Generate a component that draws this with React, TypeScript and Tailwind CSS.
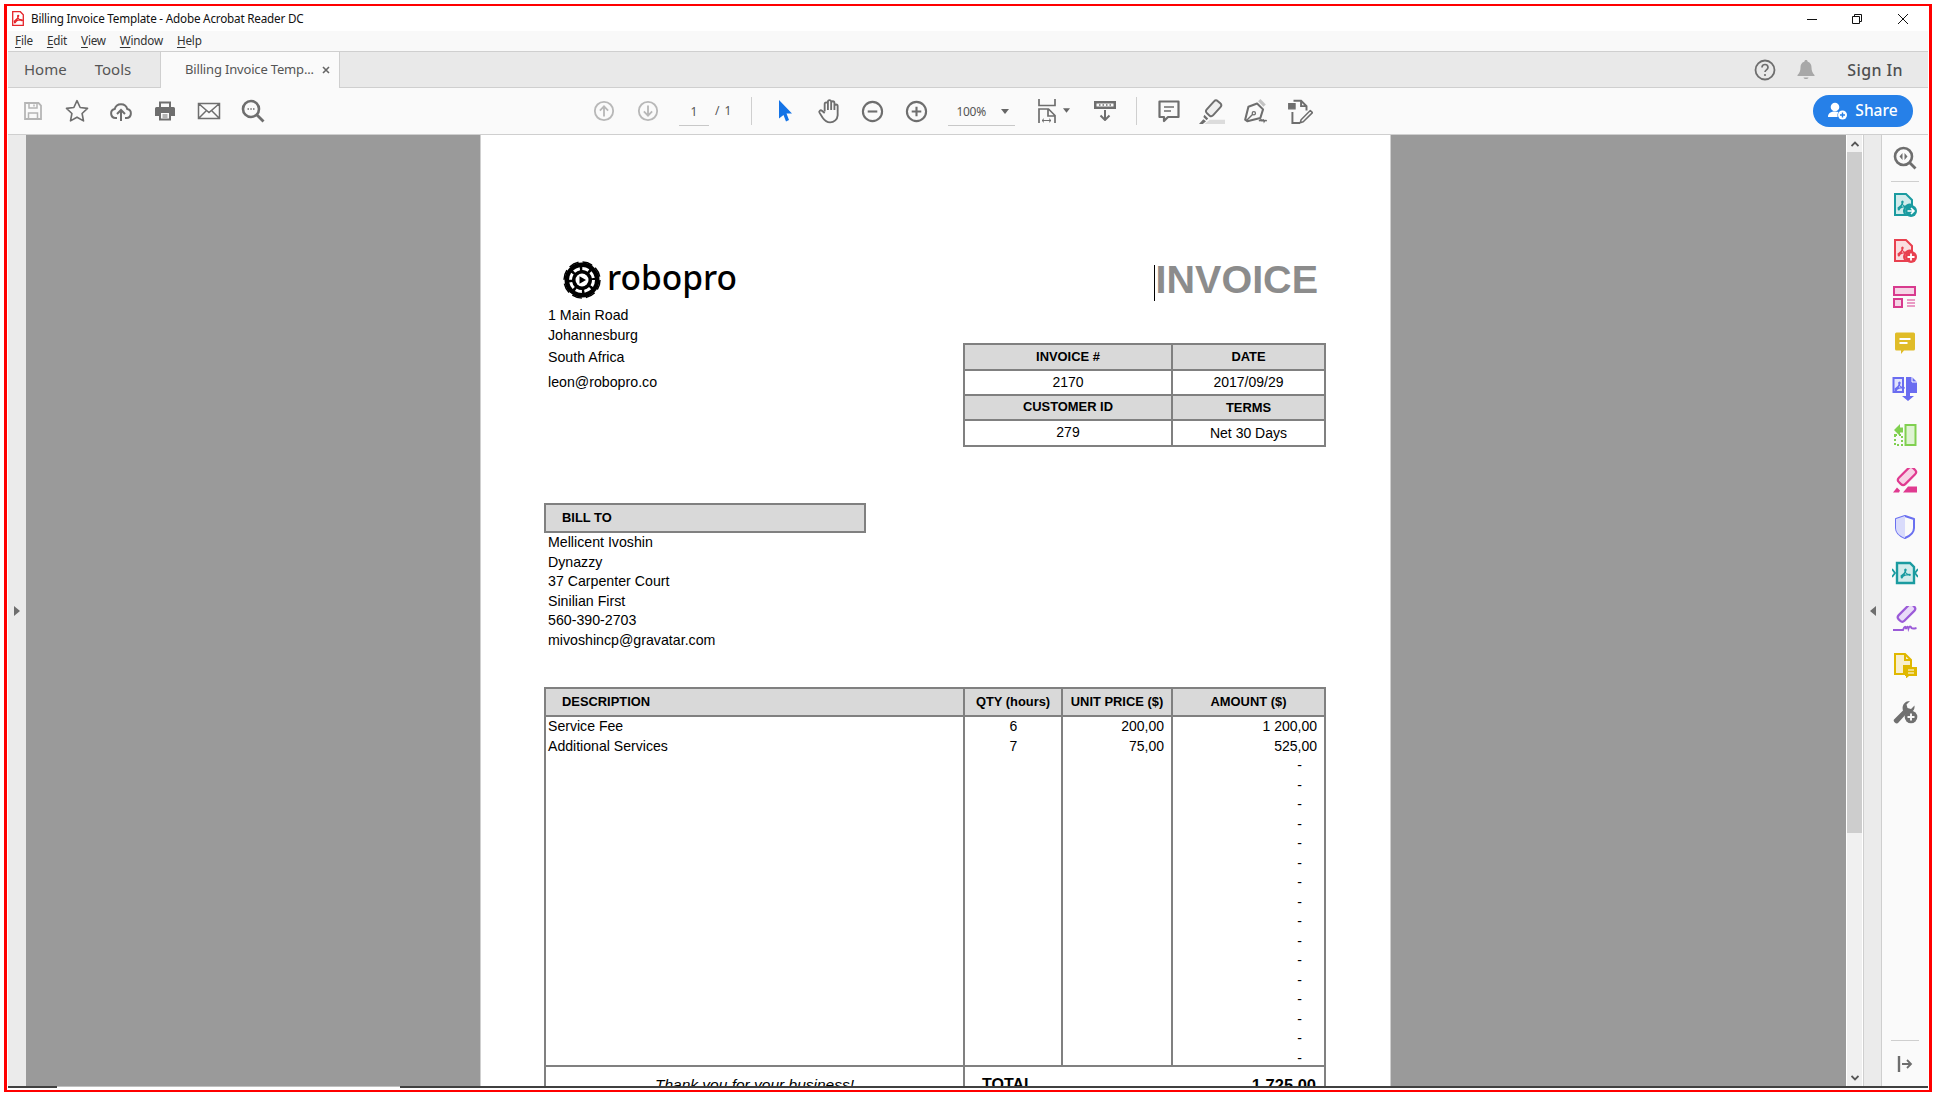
import type { ReactNode } from 'react';

const ui = "[font-family:'Noto_Sans',sans-serif]";
const doc = "[font-family:'Liberation_Sans',Arial,sans-serif]";

// Acrobat squiggle, reused by the coloured tool icons
function Squiggle({ color, x = 0, y = 0, s = 1 }: { color: string; x?: number; y?: number; s?: number }) {
  return (
    <g transform={`translate(${x} ${y}) scale(${s})`} fill="none" stroke={color} strokeWidth="1.300" strokeLinecap="round">
      <path d="M0 7C2.500 5.500 4.500 3 5 1c.2-1-1.200-1-1.200 0 0 2 2 4.500 4.700 5.200.9.2.9-.9 0-.9-3 0-5.800.8-8 2.700-.5.5.3 1 .7.5C2.800 6.500 3.500 4.500 4 3" />
    </g>
  );
}

function Slot({ children, w = 'w-[44px]' }: { children: ReactNode; w?: string }) {
  return <div className={`flex h-[46px] shrink-0 items-center justify-center ${w}`}>{children}</div>;
}

function Ico({ children, size = 24 }: { children: ReactNode; size?: number }) {
  return (
    <svg width={size} height={size} viewBox="0 0 24 24" fill="none" stroke="#6e6e6e" strokeWidth="1.800">
      {children}
    </svg>
  );
}

function ToolIcon({ children }: { children: ReactNode }) {
  return (
    <div className="flex h-[46px] w-full items-center justify-center">
      <svg width="26" height="26" viewBox="0 0 26 26" fill="none">
        {children}
      </svg>
    </div>
  );
}

const menus = ['File', 'Edit', 'View', 'Window', 'Help'];

const services = [
  ['Service Fee', '6', '200,00', '1 200,00'],
  ['Additional Services', '7', '75,00', '525,00'],
];

const billTo = ['Mellicent Ivoshin', 'Dynazzy', '37 Carpenter Court', 'Sinilian First', '560-390-2703', 'mivoshincp@gravatar.com'];

function TitleBar() {
  return (
    <div className="flex h-[25px] shrink-0 items-center bg-white">
      <svg className="ml-[4px]" width="12" height="15" viewBox="0 0 12 15" fill="none">
        <path d="M.7.7h7.600l3 3v10.600H.7z" fill="#fff" stroke="#e5252a" strokeWidth="1.300" />
        <Squiggle color="#e5252a" x={2.2} y={4} s={0.9} />
      </svg>
      <span className={`ml-[7px] text-[11.700px] tracking-[-0.2px] text-[#111] ${ui}`}>Billing Invoice Template - Adobe Acrobat Reader DC</span>
      <div className="ml-auto flex items-center pr-[20px]">
        <svg width="10" height="10" viewBox="0 0 10 10" stroke="#111" fill="none"><path d="M0 5.500h10" /></svg>
        <svg className="ml-[35px]" width="10" height="10" viewBox="0 0 10 10" stroke="#111" fill="none"><path d="M.5 2.500h7v7h-7zM2.500 2.500v-2h7v7h-2" /></svg>
        <svg className="ml-[36px]" width="10" height="10" viewBox="0 0 10 10" stroke="#111" fill="none"><path d="M0 0l10 10M10 0L0 10" /></svg>
      </div>
    </div>
  );
}

function MenuBar() {
  return (
    <div className={`flex h-[21px] shrink-0 items-center gap-[14px] border-b border-[#cfcfcf] bg-[#f9f9f9] pb-[1px] pl-[7px] text-[11.700px] tracking-[-0.2px] text-[#333] ${ui}`}>
      {menus.map((m) => (
        <span key={m}>
          <span className="underline underline-offset-2">{m[0]}</span>
          {m.slice(1)}
        </span>
      ))}
    </div>
  );
}

function TabBar() {
  return (
    <div className={`flex h-[36px] shrink-0 border-b border-[#cfcfcf] bg-[#e9e9e9] text-[#555] ${ui}`}>
      <div className="flex w-[152px] items-center gap-[28px] pl-[16px] text-[15px]">
        <span>Home</span>
        <span>Tools</span>
      </div>
      <div className="-mb-px flex w-[180px] items-center border-x border-[#cfcfcf] bg-[#fafafa] pl-[24px] text-[13px] tracking-[-0.17px]">
        <span>Billing Invoice Temp...</span>
        <svg className="ml-[8px]" width="8" height="8" viewBox="0 0 8 8" stroke="#666" strokeWidth="1.600"><path d="M1 1l6 6M7 1L1 7" /></svg>
      </div>
      <div className="ml-auto flex items-center pr-[25px]">
        <svg width="22" height="22" viewBox="0 0 22 22" fill="none">
          <circle cx="11" cy="11" r="9.500" stroke="#6e6e6e" strokeWidth="1.800" />
          <path d="M8 8.500c0-4 6-4 6 0 0 2.200-3 2.400-3 4.500" stroke="#6e6e6e" strokeWidth="1.700" />
          <circle cx="11" cy="16" r="1.100" fill="#6e6e6e" />
        </svg>
        <svg className="ml-[21px]" width="18" height="20" viewBox="0 0 18 20">
          <path d="M9 0c1 0 1.600.6 1.700 1.700 2.800.8 3.800 3 3.800 5.800 0 3.500 1 5.500 3 7.500v1H.5v-1c2-2 3-4 3-7.500 0-2.800 1-5 3.800-5.800C7.400.6 8 0 9 0zM6.500 17.500h5C11 19.500 7 19.500 6.500 17.500z" fill="#a8a8a8" />
        </svg>
        <span className="ml-[32px] text-[16px] font-medium tracking-[0.4px] text-[#505050]">Sign In</span>
      </div>
    </div>
  );
}

function Toolbar() {
  return (
    <div className="flex h-[47px] shrink-0 items-center border-b border-[#cfcfcf] bg-[#fafafa] pl-[3px]">
      <Slot>
        <Ico>
          <path d="M4 4h13.500L20 6.500V20H4z" stroke="#b5b5b5" />
          <path d="M8 4v5h8V4M7.500 20v-6h9v6M13 5.500v2" stroke="#b5b5b5" strokeWidth="1.500" />
        </Ico>
      </Slot>
      <Slot>
        <Ico size={26}>
          <path d="M12 2.500l2.900 6.300 6.800.8-5 4.700 1.300 6.800L12 17.700l-6 3.400 1.300-6.800-5-4.700 6.800-.8z" strokeLinejoin="round" strokeWidth="1.500" />
        </Ico>
      </Slot>
      <Slot>
        <Ico>
          <path d="M8 19H6.500a4.500 4.500 0 0 1-.8-8.900 6.500 6.500 0 0 1 12.600 0 4.500 4.500 0 0 1-.8 8.900H16" strokeWidth="2" />
          <path d="M12 22V11.500M8 15l4-4 4 4" strokeWidth="2" />
        </Ico>
      </Slot>
      <Slot>
        <Ico>
          <path d="M6 8V2.500h12V8h2.500A1.500 1.500 0 0 1 22 9.500V17h-4v4.500H6V17H2V9.500A1.500 1.500 0 0 1 3.500 8z" fill="#6e6e6e" stroke="none" />
          <path d="M8 4.500h8V8H8zM8 14h8v5.500H8z" fill="#fafafa" stroke="none" />
          <path d="M9.500 16h5M9.500 18h5" strokeWidth="1" />
        </Ico>
      </Slot>
      <Slot>
        <Ico>
          <path d="M1.500 4.500h21v15h-21zM1.500 4.500l10.500 9 10.500-9M1.500 19.500l8-8M22.500 19.500l-8-8" strokeWidth="1.500" />
        </Ico>
      </Slot>
      <Slot>
        <Ico>
          <circle cx="10" cy="10" r="8" strokeWidth="2.600" />
          <path d="M15.500 15.500l7 7" strokeWidth="2.800" />
          <path d="M6.500 10h1.500M9.300 10h1.500M12 10h1.500" strokeWidth="1.400" />
        </Ico>
      </Slot>

      <div className="ml-[307px] flex items-center">
        <Slot>
          <Ico size={22}>
            <circle cx="12" cy="12" r="10" stroke="#b8b8b8" strokeWidth="2" />
            <path d="M12 18V7M7.500 11.500L12 7l4.500 4.500" stroke="#b8b8b8" strokeWidth="2" />
          </Ico>
        </Slot>
        <Slot w="w-[43px]">
          <Ico size={22}>
            <circle cx="12" cy="12" r="10" stroke="#b8b8b8" strokeWidth="2" />
            <path d="M12 6v11M7.500 12.500L12 17l4.500-4.500" stroke="#b8b8b8" strokeWidth="2" />
          </Ico>
        </Slot>
        <div className={`ml-[10px] flex h-[30px] w-[30px] items-center justify-center border-b border-[#c8c8c8] pt-[2px] text-[12px] text-[#555] ${ui}`}>1</div>
        <span className={`ml-[6px] text-[12px] tracking-[1px] text-[#555] ${ui}`}>/ 1</span>
      </div>

      <div className="ml-[19px] h-[28px] w-px bg-[#cfcfcf]" />

      <div className="ml-[11px] flex items-center">
        <Slot>
          <svg width="14" height="22" viewBox="0 0 14 22">
            <path d="M1 0l13 13.500H8.500L11 20l-3 1.500-2.500-6.500L1 18.500z" fill="#1473e6" />
          </svg>
        </Slot>
        <Slot w="w-[43px]">
          <Ico size={26}>
            <path d="M8 12.500V5.500a1.500 1.500 0 0 1 3 0V11M11 11V3.500a1.500 1.500 0 0 1 3 0V11M14 11V4.500a1.500 1.500 0 0 1 3 0V11M17 11V7.500a1.500 1.500 0 0 1 3 0v8.500a7 7 0 0 1-7 6.500c-3.500 0-5-1.500-7-4.500l-2.800-4.500c-.8-1.500 1-2.800 2.300-1.700L8 14" strokeWidth="1.700" strokeLinejoin="round" />
          </Ico>
        </Slot>
        <Slot>
          <Ico size={23}>
            <circle cx="12" cy="12" r="10" strokeWidth="2.200" />
            <path d="M7 12h10" strokeWidth="2.200" />
          </Ico>
        </Slot>
        <Slot>
          <Ico size={23}>
            <circle cx="12" cy="12" r="10" strokeWidth="2.200" />
            <path d="M7 12h10M12 7v10" strokeWidth="2.200" />
          </Ico>
        </Slot>
      </div>

      <div className={`ml-[10px] flex h-[30px] w-[67px] items-center border-b border-[#c8c8c8] pl-[8px] pt-[2px] text-[12px] tracking-[-0.3px] text-[#555] ${ui}`}>
        100%
        <svg className="ml-[15px]" width="8" height="5" viewBox="0 0 8 5"><path d="M0 0h8L4 5z" fill="#666" /></svg>
      </div>

      <div className="ml-[23px] flex items-center">
        <svg width="18" height="24" viewBox="0 0 18 24" fill="none" stroke="#6e6e6e" strokeWidth="1.700">
          <path d="M1 0v6.500h16V0M1 24V10h9.500l6.500 6.500V24M10 10v7h7" />
          <path d="M4 21.500h9M4 21.500l2-1.800M4 21.500l2 1.800M13 21.500l-2-1.800M13 21.500l-2 1.800" strokeWidth="1" />
        </svg>
        <svg className="ml-[7px] -mt-[2px]" width="7" height="5" viewBox="0 0 8 5"><path d="M0 0h8L4 5z" fill="#666" /></svg>
      </div>

      <Slot w="w-[22px] ml-[24px]">
        <svg width="22" height="20" viewBox="0 0 22 20" fill="none">
          <path d="M0 0h22v8H0z" fill="#6e6e6e" />
          <path d="M2.500 2.500h17v3h-17z" fill="#fafafa" />
          <path d="M5 4h1.500M8.500 4h1.500M12 4h1.500M15.500 4H17" stroke="#6e6e6e" strokeWidth="1.500" />
          <path d="M11 9v10M6.500 14.500L11 19l4.500-4.500" stroke="#6e6e6e" strokeWidth="2" />
        </svg>
      </Slot>

      <div className="ml-[20px] h-[28px] w-px bg-[#cfcfcf]" />

      <div className="ml-[10px] flex items-center">
        <Slot w="w-[43px]">
          <Ico>
            <path d="M2.500 2.500h19V18H11l-4 4v-4H2.500z" strokeWidth="2.200" strokeLinejoin="round" />
            <path d="M7 8h10M7 12h7" strokeWidth="1.500" />
          </Ico>
        </Slot>
        <Slot>
          <Ico size={26}>
            <path d="M5 24h19v-4H10z" fill="#dcdcdc" stroke="none" />
            <rect x="9.500" y="2" width="8" height="15" rx="2.500" transform="rotate(42 13.500 9.500)" fill="#eeeeee" strokeWidth="1.800" />
            <path d="M5 15.500l3.500 3.500-1.500 1.500-3-3z" fill="#6e6e6e" stroke="none" />
            <path d="M0 24l4-4.500 2.500 2L3.500 24z" fill="#6e6e6e" stroke="none" />
          </Ico>
        </Slot>
        <Slot>
          <Ico size={26}>
            <path d="M15 2l5 5" stroke="#c4c4c4" strokeWidth="3" />
            <path d="M13 5l-8 3-3 12 2 1.500 12-3 2.500-8z" strokeLinejoin="round" strokeWidth="1.900" />
            <path d="M3 21l6-6" strokeWidth="1.300" />
            <circle cx="10" cy="14" r="1.500" strokeWidth="1.200" />
            <path d="M15 21.500c.8-2 1.400-2 1.500 0 .5-2 1-2 1.500 0 .5-2 1-2 1.500 0 .5-1 1-1 2.500-.5" strokeWidth="1.400" />
          </Ico>
        </Slot>
        <Slot>
          <Ico size={26}>
            <path d="M1.500 5h6v5h-6z" fill="#6e6e6e" strokeWidth="1" />
            <path d="M6 2.500h7l5 5v4M13 2.500v5h5M5 13v10h7" strokeWidth="1.800" />
            <path d="M21.500 11.500l2 2-8.500 8.500-2.800.8.800-2.800z" strokeWidth="1.400" strokeLinejoin="round" />
          </Ico>
        </Slot>
      </div>

      <div className={`ml-auto mr-[15px] flex h-[32px] w-[100px] items-center justify-center gap-[7px] rounded-full bg-[#2680e8] text-[15.500px] font-medium text-white ${ui}`}>
        <svg width="20" height="18" viewBox="0 0 20 18">
          <circle cx="7" cy="5" r="4.300" fill="#fff" />
          <path d="M0 15c0-4 3-5.500 7-5.500 1.500 0 2.500.2 3.500.6A5.500 5.500 0 0 0 9.500 15z" fill="#fff" />
          <circle cx="14.500" cy="13" r="4.500" fill="#fff" />
          <path d="M12 13h5M14.500 10.500v5" stroke="#2680e8" strokeWidth="1.400" />
        </svg>
        Share
      </div>
    </div>
  );
}

function DocCell({ children, head, className = '' }: { children: ReactNode; head?: boolean; className?: string }) {
  return (
    <div className={`flex items-center justify-center ${head ? 'bg-[#d9d9d9] text-[12.900px] font-bold' : 'bg-white text-[14px]'} ${className}`}>
      {children}
    </div>
  );
}

function Page() {
  return (
    <div className={`h-full w-[911px] shrink-0 overflow-hidden border-x border-[#cfcfcf] bg-white pl-[63px] pt-[125px] text-black ${doc}`}>
      <div className="flex h-[187px]">
        <div className="w-[419px] shrink-0">
          <div className="flex h-[45px] items-center pb-[5px] pl-[19px]">
            <svg width="38" height="38" viewBox="0 0 38 38" fill="none">
              <circle cx="19" cy="19" r="17.500" fill="#000" />
              <circle cx="19" cy="19" r="18" stroke="#000" strokeWidth="1.500" strokeDasharray="10 4.140" />
              <circle cx="19" cy="19" r="11.500" stroke="#fff" strokeWidth="3" strokeDasharray="6.500 2.530" />
              <circle cx="19" cy="19" r="9.500" fill="#000" />
              <circle cx="19" cy="19" r="6.500" fill="#fff" />
              <path d="M16.500 15.300l6.500 3.700-6.500 3.700z" fill="#000" />
            </svg>
            <span className="ml-[6px] -mt-[4px] text-[33.500px] font-medium leading-none [font-family:'Noto_Sans',sans-serif]">robopro</span>
          </div>
          <div className="pl-[4px] text-[14.200px] leading-[20px]">
            <div>1 Main Road</div>
            <div>Johannesburg</div>
            <div className="mt-[2px]">South Africa</div>
            <div className="mt-[5px]">leon@robopro.co</div>
          </div>
        </div>
        <div className="w-[363px] shrink-0">
          <div className="flex h-[40px] items-center justify-end pr-[8px] text-[39.500px] font-bold leading-none text-[#8c8c8c]">
            <span className="mr-[1px] mt-[5px] h-[36px] w-px bg-black" />
            INVOICE
          </div>
          <div className="mt-[43px] grid h-[104px] grid-cols-[206px_151px] grid-rows-[24px_23px_23px_24px] gap-[2px] bg-[#808080] p-[2px]">
            <DocCell head>INVOICE #</DocCell>
            <DocCell head>DATE</DocCell>
            <DocCell>2170</DocCell>
            <DocCell>2017/09/29</DocCell>
            <DocCell head className="pb-[1px]">CUSTOMER ID</DocCell>
            <DocCell head>TERMS</DocCell>
            <DocCell className="pb-[1px]">279</DocCell>
            <DocCell>Net 30 Days</DocCell>
          </div>
        </div>
      </div>

      <div className="mt-[56px] flex h-[30px] w-[322px] items-center border-2 border-[#808080] bg-[#d9d9d9] pl-[16px] text-[12.900px] font-bold">BILL TO</div>
      <div className="h-[118px] pl-[4px] text-[14.200px] leading-[19.600px]">
        {billTo.map((line) => (
          <div key={line}>{line}</div>
        ))}
      </div>

      <div className="mt-[36px] w-[782px] bg-[#808080] p-[2px] pb-0">
        <div className="grid grid-cols-[417px_96px_108px_151px] grid-rows-[26px_348px] gap-[2px]">
          <DocCell head className="!justify-start pb-[1px] pl-[16px]">DESCRIPTION</DocCell>
          <DocCell head className="pb-[1px]">QTY (hours)</DocCell>
          <DocCell head className="pb-[1px]">UNIT PRICE ($)</DocCell>
          <DocCell head className="pb-[1px]">AMOUNT ($)</DocCell>
          <div className="bg-white pl-[2px] text-[14.100px] leading-[19.500px]">
            {services.map((s) => (
              <div key={s[0]}>{s[0]}</div>
            ))}
          </div>
          <div className="bg-white pl-px text-center text-[14px] leading-[19.500px]">
            {services.map((s) => (
              <div key={s[0]}>{s[1]}</div>
            ))}
          </div>
          <div className="bg-white pr-[7px] text-right text-[14px] leading-[19.500px]">
            {services.map((s) => (
              <div key={s[0]}>{s[2]}</div>
            ))}
          </div>
          <div className="overflow-hidden bg-white pr-[7px] text-right text-[14px] leading-[19.500px]">
            {services.map((s) => (
              <div key={s[0]}>{s[3]}</div>
            ))}
            {Array.from({ length: 16 }, (_, i) => (
              <div key={i} className="pr-[15px]">-</div>
            ))}
          </div>
        </div>
        <div className="mt-[2px] grid h-[60px] grid-cols-[417px_1fr] gap-[2px]">
          <div className="bg-white pt-[8px] text-center text-[15.500px] italic leading-[20px]">Thank you for your business!</div>
          <div className="flex justify-between bg-white pl-[17px] pr-[8px] pt-[8px] font-bold leading-[20px]">
            <span className="text-[16px]">TOTAL</span>
            <span className="text-[16.500px]">1 725,00</span>
          </div>
        </div>
      </div>
    </div>
  );
}

function RightPane() {
  return (
    <div className="flex w-[46px] shrink-0 flex-col items-center bg-[#fafafa]">
      <div className="flex h-[46px] items-center">
        <Ico size={24}>
          <circle cx="10.500" cy="10.500" r="8.500" strokeWidth="2.600" />
          <path d="M16 16l6.500 6.500" strokeWidth="2.800" />
          <path d="M9.500 7v7l-3-3.500zM11.500 7v7l3-3.500z" fill="#6e6e6e" stroke="none" />
        </Ico>
      </div>
      <div className="h-px w-[28px] bg-[#cfcfcf]" />
      <div className="flex w-full flex-col">
        <ToolIcon>
          <path d="M3 2h11l6 6v5a6 6 0 0 0-6 10H3z" fill="#d3ecec" stroke="#1a9ba0" strokeWidth="2" />
          <Squiggle color="#1a9ba0" x={6} y={9} />
          <circle cx="19" cy="19" r="6" fill="#1a9ba0" />
          <path d="M15.500 19h6M19 16l3 3-3 3" stroke="#fff" strokeWidth="1.600" />
        </ToolIcon>
        <ToolIcon>
          <path d="M3 2h11l6 6v5a6 6 0 0 0-6 10H3z" fill="#fadde0" stroke="#e8404f" strokeWidth="2" />
          <Squiggle color="#e8404f" x={6} y={9} />
          <circle cx="19" cy="19" r="6" fill="#e8404f" />
          <path d="M15.500 19h7M19 15.500v7" stroke="#fff" strokeWidth="1.800" />
        </ToolIcon>
        <ToolIcon>
          <path d="M2 3h21v8H2z" fill="#f5d5e6" stroke="#d83a8e" strokeWidth="2" />
          <path d="M2 15h8v8H2z" fill="#f5d5e6" stroke="#d83a8e" strokeWidth="2" />
          <path d="M15 16h8M15 19h8M15 22h8" stroke="#d83a8e" strokeWidth="1.200" />
        </ToolIcon>
        <ToolIcon>
          <path d="M3 4a1.500 1.500 0 0 1 1.500-1.500h17A1.500 1.500 0 0 1 23 4v15a1.500 1.500 0 0 1-1.500 1.500H12L9 24v-3.500H4.500A1.500 1.500 0 0 1 3 19z" fill="#e0bc28" />
          <path d="M7.500 9h11M7.500 13h8" stroke="#fff" strokeWidth="2" />
        </ToolIcon>
        <ToolIcon>
          <path d="M1.500 2H11v14H1.500z" fill="#e3e4fc" stroke="#6a6cf0" strokeWidth="2" />
          <Squiggle color="#6a6cf0" x={3} y={6} />
          <path d="M14 1h6l5 5v11H14z" fill="#6a6cf0" />
          <path d="M20 1v5h5" stroke="#fff" strokeWidth="1" fill="none" />
          <path d="M14 14v6h-4l6 5 6-5h-4v-6z" fill="#6a6cf0" />
        </ToolIcon>
        <ToolIcon>
          <path d="M13.500 3h10v20h-10z" fill="#dff3d3" stroke="#80d050" strokeWidth="2" />
          <path d="M3 13h7v10H3z" stroke="#80d050" strokeWidth="2" strokeDasharray="2 2" />
          <path d="M2 8l6-6v3.500h3v5H8V14z" fill="#80d050" />
        </ToolIcon>
        <ToolIcon>
          <rect x="10.500" y="-2" width="9" height="20" rx="3" transform="rotate(45 15 8)" fill="#f7d3e6" stroke="#e03a90" strokeWidth="2.200" />
          <path d="M1 24.500l4-5 3 3-1 2zM11 24.500l5-6h9v6z" fill="#e03a90" />
        </ToolIcon>
        <ToolIcon>
          <path d="M13 2l9 3v9c0 5-4 8-9 10-5-2-9-5-9-10V5z" stroke="#6a70f0" strokeWidth="2" strokeLinejoin="round" />
          <path d="M13 2L4 5v9c0 5 4 8 9 10z" fill="#d9dbfb" />
        </ToolIcon>
        <ToolIcon>
          <path d="M5 3h13l4 4v16H5z" fill="#d3ecec" stroke="#1a9ba0" strokeWidth="2.400" />
          <Squiggle color="#1a9ba0" x={9} y={9} />
          <path d="M0 9l3 4-3 4M26 9l-3 4 3 4" stroke="#1a9ba0" strokeWidth="1.800" />
        </ToolIcon>
        <ToolIcon>
          <rect x="10.500" y="-3" width="8" height="20" rx="3" transform="rotate(45 14.500 7)" fill="#e9dbf8" stroke="#9b5ad8" strokeWidth="2.200" />
          <path d="M1 24h10c1.500-4 2.500-4 3-1 1-3 2-3 2.500-.5 1-2.500 2-2.500 3-.5 1 1 3 .5 5 0" stroke="#9b5ad8" strokeWidth="2" />
        </ToolIcon>
        <ToolIcon>
          <path d="M3 2h10l6 6v6h-7v8H3z" fill="#f8efce" stroke="#e0b800" strokeWidth="2" />
          <path d="M13 2v6h6" stroke="#e0b800" strokeWidth="2" />
          <path d="M13 15h12v9h-8l-3 2.500V24h-1z" fill="#e0b800" />
          <path d="M16 18h6M16 21h6" stroke="#fff" strokeWidth="1.200" />
        </ToolIcon>
        <ToolIcon>
          <path d="M2 21.500L11 12.500c-1.500-4 1-9.500 7-9.500l-3.500 3.500 1 3.500 3.500 1 3.500-3.500c.5 5-3 7.500-7 7L6 25c-1.500 1.500-5.500-1.500-4-3.500z" fill="#707070" />
          <circle cx="19" cy="19" r="6.300" fill="#707070" />
          <path d="M15.500 19h7M19 15.500v7" stroke="#fafafa" strokeWidth="1.900" />
        </ToolIcon>
      </div>
      <div className="mt-auto h-px w-[28px] bg-[#cfcfcf]" />
      <div className="flex h-[45px] items-center">
        <svg width="16" height="16" viewBox="0 0 16 16" fill="none" stroke="#6e6e6e">
          <path d="M2 0v16" strokeWidth="2.400" />
          <path d="M5 8h9M10 4l4 4-4 4" strokeWidth="1.800" />
        </svg>
      </div>
    </div>
  );
}

function Scrollbar() {
  return (
    <div className="flex w-[17px] shrink-0 flex-col border-x border-white bg-[#f0f0f0]">
      <div className="flex h-[17px] items-center justify-center">
        <svg width="8" height="6" viewBox="0 0 8 6" fill="none" stroke="#555" strokeWidth="1.800"><path d="M.5 5L4 1.500 7.500 5" /></svg>
      </div>
      <div className="h-[681px] bg-[#cdcdcd]" />
      <div className="mt-auto flex h-[17px] items-center justify-center">
        <svg width="8" height="6" viewBox="0 0 8 6" fill="none" stroke="#555" strokeWidth="1.800"><path d="M.5 1L4 4.500 7.500 1" /></svg>
      </div>
    </div>
  );
}

export default function App() {
  return (
    <div className="h-[1096px] w-[1936px] overflow-hidden bg-white p-[4px]">
      <div className="flex h-[1088px] w-[1928px] flex-col border-x-[3px] border-y-2 border-[#ff0000] bg-white px-px">
        <TitleBar />
        <MenuBar />
        <TabBar />
        <Toolbar />
        <div className="flex min-h-0 flex-1">
          <div className="flex w-[18px] shrink-0 items-center justify-center bg-[#ebebeb]">
            <svg width="6" height="10" viewBox="0 0 6 10"><path d="M0 0l6 5-6 5z" fill="#6e6e6e" /></svg>
          </div>
          <div className="flex min-w-0 flex-1 justify-center bg-[#9a9a9a] pr-px">
            <Page />
          </div>
          <Scrollbar />
          <div className="flex w-[19px] shrink-0 items-center justify-center border-x border-[#cfcfcf] bg-[#ebebeb]">
            <svg width="6" height="10" viewBox="0 0 6 10"><path d="M6 0L0 5l6 5z" fill="#6e6e6e" /></svg>
          </div>
          <RightPane />
        </div>
        <div className="flex h-[4px] shrink-0 items-start">
          <div className="h-[2px] w-[49px] bg-[#404040]" />
          <div className="h-[3px] w-[343px] border-t border-[#c0c0c0] bg-white" />
          <div className="h-[2px] flex-1 bg-[#404040]" />
        </div>
      </div>
    </div>
  );
}
